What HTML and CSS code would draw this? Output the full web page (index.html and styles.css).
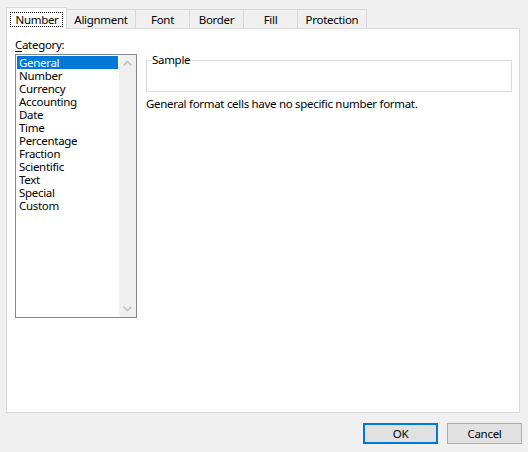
FILE: index.html
```html
<!DOCTYPE html>
<html>
<head>
<meta charset="utf-8">
<link rel="stylesheet" href="styles.css">
</head>
<body>
<div class="dialog">
  <div class="tabs">
    <div class="tab active w-number"><span class="focus">Number</span></div>
    <div class="tab w-align">Alignment</div>
    <div class="tab w-font">Font</div>
    <div class="tab w-border">Border</div>
    <div class="tab w-fill">Fill</div>
    <div class="tab w-prot">Protection</div>
  </div>
  <div class="panel">
    <div class="left">
      <div class="label"><u>C</u>ategory:</div>
      <div class="listbox">
        <div class="items">
          <div class="item selected">General</div>
          <div class="item">Number</div>
          <div class="item">Currency</div>
          <div class="item">Accounting</div>
          <div class="item">Date</div>
          <div class="item">Time</div>
          <div class="item">Percentage</div>
          <div class="item">Fraction</div>
          <div class="item">Scientific</div>
          <div class="item">Text</div>
          <div class="item">Special</div>
          <div class="item">Custom</div>
        </div>
        <div class="scrollbar">
          <svg class="arrow" width="17" height="17" viewBox="0 0 17 17"><path d="M4.5 10.5 L8.5 6.5 L12.5 10.5" fill="none" stroke="#c2c2c2" stroke-width="1.6"/></svg>
          <svg class="arrow" width="17" height="17" viewBox="0 0 17 17"><path d="M4.5 6.5 L8.5 10.5 L12.5 6.5" fill="none" stroke="#c2c2c2" stroke-width="1.6"/></svg>
        </div>
      </div>
    </div>
    <div class="right">
      <fieldset class="sample">
        <legend>Sample</legend>
        <div class="sample-body"></div>
      </fieldset>
      <div class="desc">General format cells have no specific number format.</div>
    </div>
  </div>
  <div class="buttons">
    <button class="btn default">OK</button>
    <button class="btn">Cancel</button>
  </div>
</div>
</body>
</html>
```

FILE: styles.css
```css
html, body {
  margin: 0;
  padding: 0;
  background: #f0f0f0;
}
body {
  font-family: "Noto Sans", "DejaVu Sans", sans-serif;
  font-size: 11.5px;
  letter-spacing: -0.3px;
  color: #000;
}
.dialog {
  width: 528px;
  height: 452px;
  display: flex;
  flex-direction: column;
}
.tabs {
  display: flex;
  align-items: flex-end;
  padding: 7px 0 0 6px;
  height: 22px;
  margin-bottom: -1px;
}
.tab {
  box-sizing: border-box;
  height: 19px;
  margin-bottom: 1px;
  margin-left: -1px;
  border: 1px solid #d9d9d9;
  border-bottom: none;
  background: #f0f0f0;
  display: flex;
  align-items: center;
  justify-content: center;
  line-height: 15px;
  padding-top: 1px;
}
.tab.active {
  height: 22px;
  margin-bottom: 0;
  margin-left: 0;
  background: #fff;
  position: relative;
  z-index: 1;
  align-items: flex-start;
  padding-top: 4px;
}
.focus {
  border: 1px dotted #000;
  padding: 0 3px 0 4px;
  line-height: 13px;
}
.w-number { width: 61px; }
.w-align { width: 70px; }
.w-font { width: 55px; }
.w-border { width: 55px; }
.w-fill { width: 55px; }
.w-prot { width: 70px; }

.panel {
  box-sizing: border-box;
  width: 514px;
  height: 385px;
  margin-left: 6px;
  border: 1px solid #d9d9d9;
  background: #fff;
  display: flex;
  align-items: flex-start;
  padding: 8px 0 0 8px;
}
.left {
  width: 122px;
}
.label {
  line-height: 15px;
  margin-bottom: 2px;
}
.label u {
  text-decoration-thickness: 1px;
  text-underline-offset: 2px;
}
.listbox {
  box-sizing: border-box;
  width: 122px;
  height: 264px;
  border: 1px solid #828790;
  display: flex;
}
.items {
  width: 102px;
  padding: 1px;
}
.item {
  height: 13px;
  line-height: 13px;
  padding-left: 2px;
  white-space: nowrap;
}
.item.selected {
  background: #0078d7;
  color: #fff;
}
.scrollbar {
  width: 17px;
  background: #f0f0f0;
  display: flex;
  flex-direction: column;
  justify-content: space-between;
}
.arrow {
  display: block;
}
.right {
  margin-left: 9px;
  margin-top: 16px;
  width: 366px;
}
.sample {
  margin: 0;
  padding: 0;
  border: 1px solid #dcdcdc;
  min-width: 0;
}
.sample legend {
  padding: 0;
  margin-left: 5px;
  line-height: 14px;
}
.sample-body {
  height: 24px;
}
.desc {
  margin-top: 4px;
  line-height: 15px;
}
.buttons {
  display: flex;
  justify-content: flex-end;
  gap: 9px;
  padding: 10px 6px 0 0;
}
.btn {
  box-sizing: border-box;
  width: 75px;
  height: 21px;
  margin: 0;
  padding: 0;
  background: #e1e1e1;
  border: 1px solid #adadad;
  font-family: inherit;
  font-size: 11.5px;
  letter-spacing: -0.3px;
  color: #000;
}
.btn.default {
  border: 2px solid #0078d7;
}
```
